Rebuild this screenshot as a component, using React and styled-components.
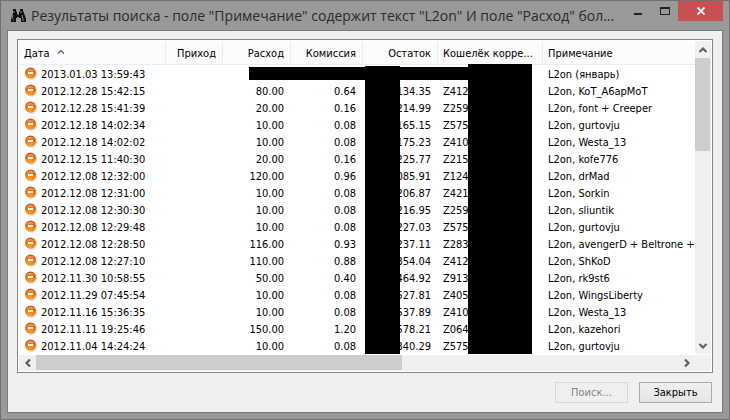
import React from "react";
import styled, { createGlobalStyle } from "styled-components";

const columns = [
  { key: "date", title: "Дата", width: 147, sorted: true },
  { key: "income", title: "Приход", width: 57, numeric: true },
  { key: "expense", title: "Расход", width: 68, numeric: true },
  { key: "fee", title: "Комиссия", width: 72, numeric: true },
  { key: "balance", title: "Остаток", width: 75, numeric: true },
  { key: "purse", title: "Кошелёк корре...", width: 105 },
  { key: "note", title: "Примечание" },
];

const operations = [
  ["2013.01.03 13:59:43", "", "", "", "", "L2on (январь)"],
  ["2012.12.28 15:42:15", "80.00", "0.64", "134.35", "Z412", "L2on, KoT_A6apMoT"],
  ["2012.12.28 15:41:39", "20.00", "0.16", "214.99", "Z259", "L2on, font + Creeper"],
  ["2012.12.18 14:02:34", "10.00", "0.08", "165.15", "Z575", "L2on, gurtovju"],
  ["2012.12.18 14:02:02", "10.00", "0.08", "175.23", "Z410", "L2on, Westa_13"],
  ["2012.12.15 11:40:30", "20.00", "0.16", "225.77", "Z215", "L2on, kofe776"],
  ["2012.12.08 12:32:00", "120.00", "0.96", "085.91", "Z124", "L2on, drMad"],
  ["2012.12.08 12:31:00", "10.00", "0.08", "206.87", "Z421", "L2on, Sorkin"],
  ["2012.12.08 12:30:30", "10.00", "0.08", "216.95", "Z259", "L2on, sliuntik"],
  ["2012.12.08 12:29:48", "10.00", "0.08", "227.03", "Z575", "L2on, gurtovju"],
  ["2012.12.08 12:28:50", "116.00", "0.93", "237.11", "Z283", "L2on, avengerD + Beltrone +"],
  ["2012.12.08 12:27:10", "110.00", "0.88", "354.04", "Z412", "L2on, ShKoD"],
  ["2012.11.30 10:58:55", "50.00", "0.40", "464.92", "Z913", "L2on, rk9st6"],
  ["2012.11.29 07:45:54", "10.00", "0.08", "527.81", "Z405", "L2on, WingsLiberty"],
  ["2012.11.16 15:36:35", "10.00", "0.08", "537.89", "Z410", "L2on, Westa_13"],
  ["2012.11.11 19:25:46", "150.00", "1.20", "578.21", "Z064", "L2on, kazehori"],
  ["2012.11.04 14:24:24", "10.00", "0.08", "340.29", "Z575", "L2on, gurtovju"],
].map(([date, expense, fee, balance, purse, note]) => ({
  date,
  income: "",
  expense,
  fee,
  balance,
  purse,
  note,
}));

const arrows = {
  up: "M1.5 7 L5 3.5 L8.5 7",
  down: "M1.5 3 L5 6.5 L8.5 3",
  left: "M7 1.5 L3.5 5 L7 8.5",
  right: "M3 1.5 L6.5 5 L3 8.5",
};

const Arrow = ({ direction }) => (
  <svg width="10" height="10" viewBox="0 0 10 10" aria-hidden="true">
    <path d={arrows[direction]} fill="none" stroke="#606060" strokeWidth="2.2" />
  </svg>
);

const BinocularsIcon = () => (
  <svg width="16" height="16" viewBox="0 0 16 16" aria-hidden="true">
    <path
      d="M3 1h3v2l1 1v2h2V4l1-1V1h3v2l1 2 2 6v3h-5v-4H9V9H7v1H6v4H1v-3l2-6z"
      fill="#111"
    />
    <path
      d="M4 3v2M11 3v2M3 7l-1 4M12 7l1 4M8 6v1M3 12h1M12 12h2"
      stroke="#8a8a8a"
      strokeWidth="1"
      fill="none"
    />
  </svg>
);

const ExpenseIcon = () => (
  <svg width="13" height="13" viewBox="0 0 13 13" aria-hidden="true">
    <defs>
      <radialGradient id="ball" cx="0.45" cy="0.85" r="0.9">
        <stop offset="0" stopColor="#ffa01f" />
        <stop offset="0.5" stopColor="#f57a0c" />
        <stop offset="1" stopColor="#c2481c" />
      </radialGradient>
    </defs>
    <circle cx="7.2" cy="7" r="5.7" fill="#b9b9b9" opacity="0.6" />
    <circle cx="6.5" cy="6" r="5.5" fill="url(#ball)" />
    <path d="M2.2 4.6a4.7 4.7 0 0 1 8.6 0q-4.300-1.500-8.600 0z" fill="#fff" opacity="0.3" />
    <path d="M4 5h5v2H4z" fill="#fff" />
  </svg>
);

const SortIcon = () => (
  <svg width="8" height="5" viewBox="0 0 8 5" aria-hidden="true">
    <path d="M1 4.500 L4 1.500 L7 4.500" fill="none" stroke="#3b5e80" strokeWidth="1.200" />
  </svg>
);

const App = () => (
  <>
    <GlobalStyle />
    <Window>
      <TitleBar>
        <BinocularsIcon />
        <Title>
          Результаты поиска - поле "Примечание" содержит текст "L2on" И поле
          "Расход" бол...
        </Title>
        <WindowControls>
          <ControlButton type="button" aria-label="Свернуть">
            <svg width="10" height="10" viewBox="0 0 10 10">
              <path d="M1 7h8v2H1z" fill="#222" />
            </svg>
          </ControlButton>
          <ControlButton type="button" aria-label="Развернуть">
            <svg width="10" height="8" viewBox="0 0 10 8">
              <path d="M0 0h10v8H0zM1 2v5h8V2z" fill="#222" fillRule="evenodd" />
            </svg>
          </ControlButton>
          <CloseButton type="button" aria-label="Закрыть окно">
            <svg width="8" height="8" viewBox="0 0 8 8">
              <path d="M0.500 0.500l7 7M7.500 0.500l-7 7" stroke="#fff" strokeWidth="1.800" />
            </svg>
          </CloseButton>
        </WindowControls>
      </TitleBar>
      <Client>
        <ListFrame>
          <Viewport>
            <Table>
              <colgroup>
                {columns.map(({ key, width }) => (
                  <Column key={key} $width={width} />
                ))}
              </colgroup>
              <thead>
                <tr>
                  {columns.map(({ key, title, numeric, sorted }) => (
                    <HeaderCell
                      key={key}
                      scope="col"
                      $numeric={numeric}
                      aria-sort={sorted ? "ascending" : undefined}
                    >
                      {title}
                      {sorted && <SortIcon />}
                    </HeaderCell>
                  ))}
                </tr>
              </thead>
              <tbody>
                {operations.map((operation) => (
                  <tr key={operation.date}>
                    {columns.map(({ key, numeric }) => (
                      <Cell key={key} $numeric={numeric}>
                        {key === "date" ? (
                          <DateValue>
                            <ExpenseIcon />
                            {operation.date}
                          </DateValue>
                        ) : (
                          operation[key]
                        )}
                      </Cell>
                    ))}
                  </tr>
                ))}
              </tbody>
            </Table>
            {/* hidden sums and purse numbers */}
            <Redaction $left={230} $top={26} $width={220} $height={13} />
            <Redaction $left={346} $top={25} $width={35} />
            <Redaction $left={449} $top={23} $width={64} />
          </Viewport>
          <VerticalScroll>
            <ScrollButton type="button" aria-label="Вверх">
              <Arrow direction="up" />
            </ScrollButton>
            <Track>
              <VerticalThumb />
            </Track>
            <ScrollButton type="button" aria-label="Вниз">
              <Arrow direction="down" />
            </ScrollButton>
          </VerticalScroll>
          <HorizontalScroll>
            <ScrollButton type="button" aria-label="Влево">
              <Arrow direction="left" />
            </ScrollButton>
            <Track>
              <HorizontalThumb />
            </Track>
            <ScrollButton type="button" aria-label="Вправо">
              <Arrow direction="right" />
            </ScrollButton>
          </HorizontalScroll>
        </ListFrame>
        <Footer>
          <DialogButton type="button" disabled>
            Поиск...
          </DialogButton>
          <DialogButton type="button">Закрыть</DialogButton>
        </Footer>
      </Client>
    </Window>
  </>
);

export default App;

const GlobalStyle = createGlobalStyle`
  * {
    box-sizing: border-box;
  }

  body {
    margin: 0;
    font-family: "DejaVu Sans Condensed", "DejaVu Sans", sans-serif;
    font-size: 11px;
    color: #000;
  }

  button {
    font: inherit;
    color: inherit;
    border: 0;
    padding: 0;
  }

  svg {
    display: block;
    flex: none;
  }
`;

const Window = styled.div`
  display: flex;
  flex-direction: column;
  min-height: 100vh;
  padding: 0 6px 6px;
  background: #999;
  border: 1px solid #707070;
`;

const TitleBar = styled.header`
  display: flex;
  align-items: center;
  height: 29px;
  padding-left: 3px;
`;

const Title = styled.h1`
  flex: 1;
  min-width: 0;
  margin: 0 0 0 5px;
  overflow: hidden;
  white-space: nowrap;
  font-family: "Open Sans", "Noto Sans", sans-serif;
  font-size: 14px;
  font-weight: 400;
  line-height: 29px;
  color: #2b2b2b;
`;

const WindowControls = styled.div`
  display: flex;
  align-self: flex-start;
`;

const ControlButton = styled.button`
  display: flex;
  align-items: center;
  justify-content: center;
  width: 27px;
  height: 20px;
  background: transparent;
`;

const CloseButton = styled(ControlButton)`
  width: 45px;
  background: #c75050;
`;

const Client = styled.main`
  flex: 1;
  padding: 8px 9px;
  background: #f0f0f0;
  border: 1px solid #7b7b7b;
`;

const ListFrame = styled.section`
  display: grid;
  grid-template-columns: minmax(0, 1fr) 16px;
  row-gap: 1px;
  padding: 1px;
  background: #fff;
  border: 1px solid #828790;
`;

const Viewport = styled.div`
  position: relative;
  overflow: hidden;
`;

const Table = styled.table`
  width: 100%;
  table-layout: fixed;
  border-collapse: separate;
  border-spacing: 0;
`;

const Column = styled.col`
  width: ${({ $width }) => ($width ? `${$width}px` : "auto")};
`;

const HeaderCell = styled.th`
  height: 24px;
  padding: ${({ $numeric }) => ($numeric ? "2px 6px 0 5px" : "2px 5px 0")};
  overflow: hidden;
  white-space: nowrap;
  font-weight: 400;
  text-align: ${({ $numeric }) => ($numeric ? "right" : "left")};
  background: #fcfcfc;
  border-right: 1px solid #e3effb;
  border-bottom: 1px solid #e3effb;

  &:last-child {
    border-right: 0;
  }

  svg {
    display: inline-block;
    margin-left: 7px;
    vertical-align: 3px;
  }
`;

const Cell = styled.td`
  height: 17px;
  padding: ${({ $numeric }) => ($numeric ? "2px 7px 0 5px" : "2px 0 0 5px")};
  overflow: hidden;
  white-space: nowrap;
  line-height: 15px;
  text-align: ${({ $numeric }) => ($numeric ? "right" : "left")};
`;

const DateValue = styled.span`
  display: flex;
  align-items: flex-start;
  gap: 4px;
`;

const Redaction = styled.span`
  position: absolute;
  left: ${({ $left }) => $left}px;
  top: ${({ $top }) => $top}px;
  bottom: ${({ $height }) => ($height ? "auto" : 0)};
  width: ${({ $width }) => $width}px;
  height: ${({ $height }) => ($height ? `${$height}px` : "auto")};
  background: #000;
`;

const ScrollButton = styled.button`
  display: flex;
  flex: none;
  align-items: center;
  justify-content: center;
  background: #f0f0f0;
`;

const Track = styled.div`
  flex: 1;
`;

const VerticalScroll = styled.div`
  display: flex;
  flex-direction: column;
  background: #f0f0f0;

  ${ScrollButton} {
    height: 17px;
  }
`;

const VerticalThumb = styled.div`
  width: 15px;
  height: 93px;
  background: #cdcdcd;
`;

const HorizontalScroll = styled.div`
  display: flex;
  grid-column: 1 / -1;
  height: 16px;
  padding-right: 16px;
  background: #f0f0f0;

  ${ScrollButton} {
    width: 17px;
    height: 16px;
  }
`;

const HorizontalThumb = styled.div`
  width: 57%;
  height: 15px;
  background: #cdcdcd;
`;

const Footer = styled.footer`
  display: flex;
  justify-content: flex-end;
  gap: 11px;
  margin-top: 9px;
  padding-right: 1px;
`;

const DialogButton = styled.button`
  width: 73px;
  height: 21px;
  background: linear-gradient(#f0f0f0, #e5e5e5);
  border: 1px solid #acacac;

  &:disabled {
    color: #838383;
    background: #efefef;
    border-color: #d9d9d9;
  }
`;
